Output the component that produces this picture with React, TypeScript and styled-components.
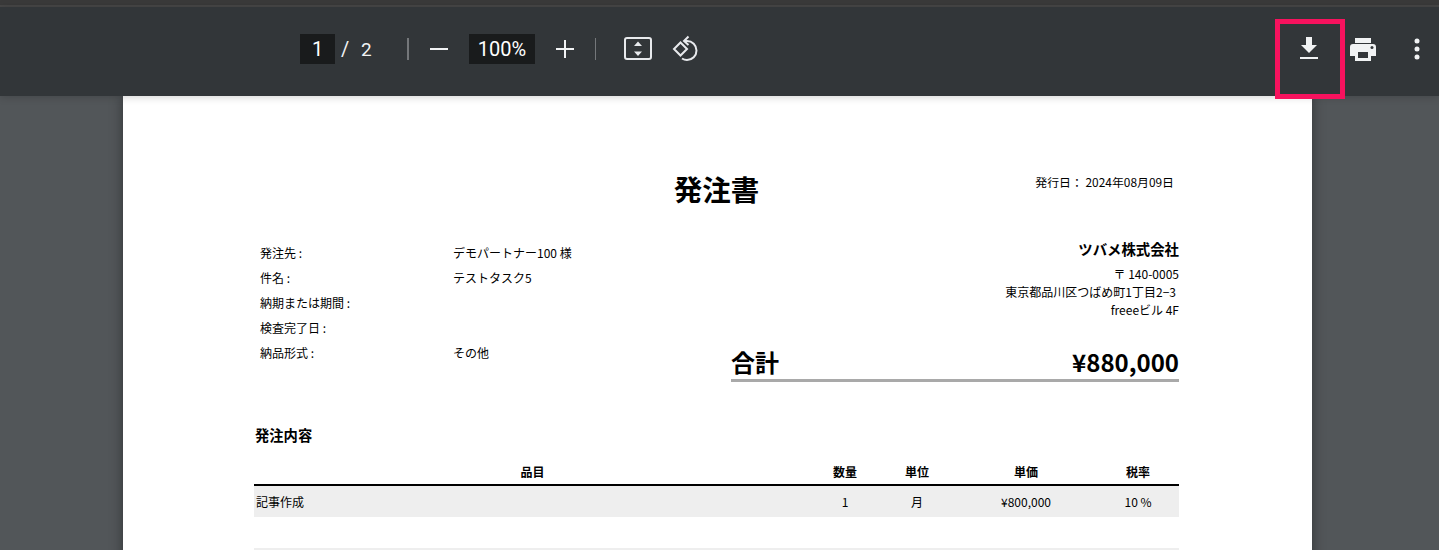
import React from "react";
import styled, { createGlobalStyle } from "styled-components";

const Global = createGlobalStyle`
  html, body { margin: 0; padding: 0; width: 1439px; height: 550px; overflow: hidden; background: #525659; }
  * { box-sizing: border-box; }
`;

const Shell = styled.div`
  width: 1439px; height: 550px; display: flex; flex-direction: column; overflow: hidden;
  background: #525659; font-family: "Noto Sans CJK JP", "Noto Sans", sans-serif;
`;
const TopStrip = styled.div`
  height: 7px; flex: none; background: #3a3a3a; border-bottom: 2px solid #474747;
`;
const Toolbar = styled.div`
  position: relative; z-index: 2;
  height: 89px; flex: none; background: #323639; display: flex; align-items: center; padding: 0 0 5px 300px; color: #f1f3f4;
  box-shadow: 0 1px 8px rgba(0,0,0,.18);
`;
const Field = styled.div<{ $w: number; $ml?: number }>`
  width: ${p => p.$w}px; height: 30px; background: #191b1c; color: #fff; display: flex; align-items: center; justify-content: center;
  font-family: Roboto, sans-serif; font-size: 20px; margin-left: ${p => p.$ml ?? 0}px;
`;
const Slash = styled.span`
  font-family: Roboto, sans-serif; font-size: 20px; margin-left: 6px; width: 20px;
`;
const Total = styled.span`
  font-family: Roboto, sans-serif; font-size: 19px; width: 48px;
`;
const Sep = styled.div<{ $h: number; $w: number; $ml: number }>`
  width: ${p => p.$w}px; height: ${p => p.$h}px; background: #74777a; margin-left: ${p => p.$ml}px;
`;
const IconBox = styled.svg<{ $ml?: number; $mr?: number }>`
  flex: none; margin-left: ${p => p.$ml ?? 0}px; margin-right: ${p => p.$mr ?? 0}px; display: block;
`;
const Spacer = styled.div`flex: 1;`;
const Highlight = styled.div`
  position: absolute; left: 1275px; top: 12px; width: 70px; height: 80px; border: 5px solid #f7125e;
`;
const Stage = styled.div`
  flex: 1; display: flex; justify-content: center; padding-right: 4px; min-height: 0;
`;
const Sheet = styled.div`
  width: 1189px; height: 800px; flex: none; background: #fff; color: #000;
  box-shadow: 0 0 12px rgba(0,0,0,.4); padding: 0 133px 0 131px; font-size: 12px;
`;
const Head = styled.div`
  height: 129px; display: flex; position: relative; justify-content: center; padding-top: 72px;
`;
const Title = styled.h1`
  margin: 0; font-size: 28.5px; line-height: 42px; font-weight: 700; height: 42px;
`;
const IssueDate = styled.div`
  position: absolute; right: 5px; top: 76px; font-size: 11.9px; line-height: 20px;
`;
const Info = styled.div`
  display: flex; justify-content: space-between; height: 198px;
`;
const Rows = styled.div`
  padding: 15px 0 0 6px; width: 420px;
`;
const InfoRow = styled.div`
  display: flex; height: 25px; align-items: center; font-size: 12px;
`;
const InfoLabel = styled.div`width: 193px;`;
const Right = styled.div`
  width: 448px; display: flex; flex-direction: column; align-items: stretch; padding-top: 12px;
`;
const Company = styled.div`
  text-align: right; font-size: 14.4px; font-weight: 700; line-height: 24px; height: 28px;
`;
const Addr = styled.div<{ $pr?: number }>`
  text-align: right; font-size: 12px; line-height: 18px; padding-right: ${p => p.$pr ?? 0}px;
`;
const TotalRow = styled.div`
  display: flex; justify-content: space-between; align-items: flex-end; margin-top: 26px; height: 37px;
  border-bottom: 3px solid #a9a9a9; font-weight: 700; line-height: 34px;
`;
const TotalLabel = styled.span`font-size: 24px;`;
const TotalValue = styled.span`font-size: 24px;`;
const SectionTitle = styled.div`
  font-size: 14.3px; font-weight: 700; line-height: 24px; height: 38px; margin-left: 1px;
`;
const Grid = "557px 68px 76px 142px 82px";
const TableHead = styled.div`
  display: grid; grid-template-columns: ${Grid}; height: 25px; border-bottom: 2px solid #000;
  font-weight: 700; font-size: 12px; line-height: 22px; text-align: center;
`;
const TableRow = styled.div`
  display: grid; grid-template-columns: ${Grid}; height: 31px; background: #eeeeee; font-size: 12px; line-height: 32px; text-align: center;
`;
const NameCell = styled.div`text-align: left; padding-left: 2px;`;
const Blank = styled.div`
  height: 33px; border-bottom: 2px solid #eeeeee;
`;

export default function App() {
  return (
    <>
      <Global />
      <Shell>
        <TopStrip />
        <Toolbar>
          <Field $w={35}>1</Field>
          <Slash>/</Slash>
          <Total>2</Total>
          <Sep $w={2} $h={22} $ml={-2} />
          <IconBox $ml={20} width="20" height="20" viewBox="0 0 20 20"><rect x="1" y="9" width="18" height="2" fill="#f1f3f4" /></IconBox>
          <Field $w={66} $ml={20}>100%</Field>
          <IconBox $ml={20} width="20" height="20" viewBox="0 0 20 20"><path d="M9 1h2v8h8v2h-8v8H9v-8H1V9h8z" fill="#f1f3f4" /></IconBox>
          <Sep $w={1} $h={22} $ml={20} />
          <IconBox $ml={27} width="30" height="26" viewBox="0 0 30 26">
            <rect x="2" y="2" width="26" height="21" rx="2" fill="none" stroke="#e8eaed" strokeWidth="2" />
            <path d="M15 5.500l4 4.500h-8zM15 20l-4-4.500h8z" fill="#e8eaed" />
          </IconBox>
          <IconBox $ml={19} width="28" height="28" viewBox="0 0 28 28">
            <path d="M16.500 1.500 L12 6 L16.500 10 M12.500 6 H15 A9.500 9.500 0 0 1 15 25 A9.500 9.500 0 0 1 10 23.500" fill="none" stroke="#e8eaed" strokeWidth="2" />
            <path d="M8.500 7.500L15 14l-6.500 6.500L2 14z" fill="none" stroke="#e8eaed" strokeWidth="2" />
          </IconBox>
          <Spacer />
          <IconBox width="18" height="24" viewBox="0 0 18 24" $mr={32}>
            <path d="M6 0h6v8h5l-8 8-8-8h5z" fill="#f1f3f4" /><rect x="0" y="20" width="18" height="2" fill="#f1f3f4" />
          </IconBox>
          <IconBox width="26" height="23" viewBox="0 0 26 23" $mr={38}>
            <path d="M5 0h16v5H5z M3 6h20a3 3 0 0 1 3 3v9h-5v5H5v-5H0V9a3 3 0 0 1 3-3z" fill="#f1f3f4" />
            <rect x="8" y="14" width="10" height="6" fill="#323639" /><circle cx="22" cy="9.500" r="1.500" fill="#323639" />
          </IconBox>
          <IconBox width="6" height="22" viewBox="0 0 6 22" $mr={19}>
            <circle cx="3" cy="3" r="2.500" fill="#f1f3f4" /><circle cx="3" cy="11" r="2.500" fill="#f1f3f4" /><circle cx="3" cy="19" r="2.500" fill="#f1f3f4" />
          </IconBox>
          <Highlight />
        </Toolbar>
        <Stage>
          <Sheet>
            <Head>
              <Title>発注書</Title>
              <IssueDate>発行日： 2024年08月09日</IssueDate>
            </Head>
            <Info>
              <Rows>
                <InfoRow><InfoLabel>発注先 :</InfoLabel><div>デモパートナー100 様</div></InfoRow>
                <InfoRow><InfoLabel>件名 :</InfoLabel><div>テストタスク5</div></InfoRow>
                <InfoRow><InfoLabel>納期または期間 :</InfoLabel></InfoRow>
                <InfoRow><InfoLabel>検査完了日 :</InfoLabel></InfoRow>
                <InfoRow><InfoLabel>納品形式 :</InfoLabel><div>その他</div></InfoRow>
              </Rows>
              <Right>
                <Company>ツバメ株式会社</Company>
                <Addr>〒 140-0005</Addr>
                <Addr $pr={3}>東京都品川区つばめ町1丁目2−3</Addr>
                <Addr>freeeビル 4F</Addr>
                <TotalRow><TotalLabel>合計</TotalLabel><TotalValue>¥880,000</TotalValue></TotalRow>
              </Right>
            </Info>
            <SectionTitle>発注内容</SectionTitle>
            <TableHead><div>品目</div><div>数量</div><div>単位</div><div>単価</div><div>税率</div></TableHead>
            <TableRow><NameCell>記事作成</NameCell><div>1</div><div>月</div><div>¥800,000</div><div>10 %</div></TableRow>
            <Blank />
          </Sheet>
        </Stage>
      </Shell>
    </>
  );
}
